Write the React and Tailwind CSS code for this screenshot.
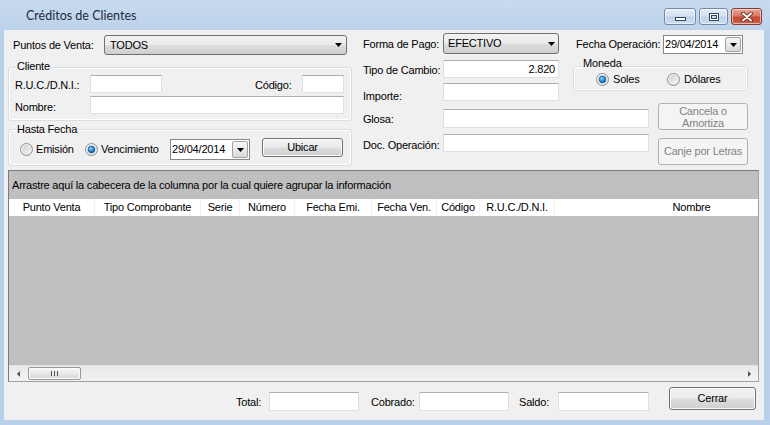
import React from "react";

function Arrow() {
  return (
    <svg width="7" height="4" viewBox="0 0 7 4" className="shrink-0">
      <path d="M0 0H7L3.5 4Z" fill="#000" />
    </svg>
  );
}

function TB({ cls = "", children }) {
  return (
    <div className={`shrink-0 bg-white border border-[#dde1e7] border-t-[#abadb3] flex items-center justify-end pr-[3px] ${cls}`}>
      {children}
    </div>
  );
}

function Combo({ cls = "", text }) {
  return (
    <div className={`shrink-0 flex items-center rounded-[3px] border border-[#707070] bg-[linear-gradient(#f2f2f2_0%,#ebebeb_48%,#dddddd_52%,#cfcfcf_100%)] ${cls}`}>
      <span className="flex-1 whitespace-nowrap">{text}</span>
      <Arrow />
    </div>
  );
}

function Btn({ cls = "", children, disabled }) {
  return (
    <div
      className={`shrink-0 flex flex-col items-center justify-center rounded-[3px] border text-center ${
        disabled
          ? "border-[#adb2b5] bg-[#f4f4f4] text-[#838383]"
          : "border-[#707070] bg-[linear-gradient(#f2f2f2_0%,#ebebeb_48%,#dddddd_52%,#cfcfcf_100%)] shadow-[inset_0_0_0_1px_#fcfcfc]"
      } ${cls}`}
    >
      {children}
    </div>
  );
}

function DatePick({ cls = "" }) {
  return (
    <div className={`shrink-0 flex items-stretch bg-white border border-[#828790] ${cls}`}>
      <span className="flex-1 flex items-center pl-[1px] whitespace-nowrap">29/04/2014</span>
      <div className="w-[16px] m-[1px] flex items-center justify-center rounded-[2px] border border-[#9ea3a8] bg-[linear-gradient(#f6f6f6_0%,#e9e9e9_50%,#d9d9d9_100%)]">
        <Arrow />
      </div>
    </div>
  );
}

function Radio({ checked }) {
  return (
    <svg width="13" height="13" viewBox="0 0 13 13" className="shrink-0">
      <defs>
        <linearGradient id="rOuter" x1="0" y1="0" x2="1" y2="1">
          <stop offset="0" stopColor="#f7f7f7" />
          <stop offset="1" stopColor="#e0e0e0" />
        </linearGradient>
        <linearGradient id="rInner" x1="0" y1="0" x2="1" y2="1">
          <stop offset="0" stopColor="#cbcfd5" />
          <stop offset="1" stopColor="#f6f6f6" />
        </linearGradient>
        <radialGradient id="rDot" cx="0.4" cy="0.35" r="0.7">
          <stop offset="0" stopColor="#8fd4fb" />
          <stop offset="0.5" stopColor="#2f8fd6" />
          <stop offset="1" stopColor="#0b4c86" />
        </radialGradient>
      </defs>
      <circle cx="6.5" cy="6.5" r="6" fill="url(#rOuter)" stroke="#8e8f8f" />
      <circle cx="6.5" cy="6.5" r="4.3" fill="url(#rInner)" />
      {checked && <circle cx="6.5" cy="6.5" r="3.4" fill="url(#rDot)" stroke="#1d5284" strokeWidth="0.6" />}
    </svg>
  );
}

function Group({ cls = "", legend, legendCls = "", children }) {
  return (
    <div className={`shrink-0 flex flex-col rounded-[3px] border border-[#d5dfe5] shadow-[inset_0_0_0_1px_#ffffff] ${cls}`}>
      <div className={`self-start h-[13px] bg-[#f0f0f0] px-[1px] whitespace-nowrap ${legendCls}`}>{legend}</div>
      {children}
    </div>
  );
}

function CapBtn({ cls = "", children, red }) {
  return (
    <div
      className={`h-[17px] flex items-center justify-center rounded-[3px] border ${
        red
          ? "border-[#8a3a2e] bg-[linear-gradient(#e8a594_0%,#d97a66_45%,#c34a36_55%,#c8604a_100%)]"
          : "border-[#7389a6] bg-[linear-gradient(#e6eef8_0%,#d3e0f0_45%,#c1d3ea_55%,#cbdcef_100%)]"
      } shadow-[inset_0_0_0_1px_rgba(255,255,255,0.55)] ${cls}`}
    >
      {children}
    </div>
  );
}

const cols = [
  ["Punto Venta", "w-[86px]"],
  ["Tipo Comprobante", "w-[106px]"],
  ["Serie", "w-[39px]"],
  ["Número", "w-[55px]"],
  ["Fecha Emi.", "w-[77px]"],
  ["Fecha Ven.", "w-[65px]"],
  ["Código", "w-[43px]"],
  ["R.U.C./D.N.I.", "w-[75px]"],
  ["Nombre", "w-[274px]"],
];

export default function App() {
  return (
    <div className="w-[770px] h-[425px] overflow-hidden bg-[#b9d1ea] flex flex-col font-['Liberation_Sans',Arial,sans-serif] text-[11px] leading-[13px] tracking-[-0.2px] text-black">
      {/* Title bar */}
      <div className="h-[30px] shrink-0 flex items-start bg-[linear-gradient(#c8daee,#bcd3eb)]">
        <div className="ml-[26px] mt-[8px] font-['Lato',sans-serif] text-[12.5px] leading-[16px] tracking-normal text-[#1e2b3b]">
          Créditos de Clientes
        </div>
        <div className="ml-auto mr-[8px] mt-[8px] flex gap-[3px]">
          <CapBtn cls="w-[32px] items-end pb-[3px]">
            <svg width="11" height="4" viewBox="0 0 11 4">
              <rect x="0.5" y="0.5" width="10" height="3" fill="#ffffff" stroke="#36465d" />
            </svg>
          </CapBtn>
          <CapBtn cls="w-[29px]">
            <svg width="10" height="8" viewBox="0 0 10 8">
              <rect x="0.5" y="0.5" width="9" height="7" fill="#ffffff" stroke="#36465d" />
              <rect x="2.5" y="2.5" width="5" height="3" fill="#c9d9ee" stroke="#36465d" />
            </svg>
          </CapBtn>
          <CapBtn red cls="w-[31px]">
            <svg width="12" height="10" viewBox="0 0 12 10">
              <path d="M2 1.5L10 8.5M10 1.5L2 8.5" stroke="#5a1e16" strokeWidth="3.6" strokeLinecap="round" />
              <path d="M2 1.5L10 8.5M10 1.5L2 8.5" stroke="#ffffff" strokeWidth="2" strokeLinecap="round" />
            </svg>
          </CapBtn>
        </div>
      </div>

      {/* Client area */}
      <div className="flex-1 ml-[4px] mr-[6px] mb-[5px] bg-[#f0f0f0] flex flex-col">
        {/* Top form */}
        <div className="h-[140px] shrink-0 flex">
          {/* Left column */}
          <div className="ml-[4px] w-[344px] shrink-0 flex flex-col">
            <div className="mt-[5px] flex items-center">
              <div className="w-[96px] pl-[5px] whitespace-nowrap">Puntos de Venta:</div>
              <Combo cls="w-[243px] h-[20px] pl-[5px] pr-[4px]" text="TODOS" />
            </div>

            <Group cls="mt-[12px] h-[54px]" legend="Cliente" legendCls="-mt-[8px] ml-[7px]">
              <div className="mt-[2px] flex items-start">
                <div className="w-[81px] pl-[6px] mt-[4px] whitespace-nowrap">R.U.C./D.N.I.:</div>
                <TB cls="w-[72px] h-[18px]" />
                <div className="ml-[93px] w-[47px] mt-[4px] whitespace-nowrap">Código:</div>
                <TB cls="w-[42px] h-[18px]" />
              </div>
              <div className="mt-[3px] flex items-start">
                <div className="w-[81px] pl-[6px] mt-[5px] whitespace-nowrap">Nombre:</div>
                <TB cls="w-[254px] h-[18px]" />
              </div>
            </Group>

            <Group cls="mt-[8px] h-[37px]" legend="Hasta Fecha" legendCls="-mt-[7px] ml-[7px]">
              <div className="flex items-start">
                <div className="ml-[11px] w-[65px] mt-[7px] flex items-center gap-[3px] whitespace-nowrap">
                  <Radio />
                  <span>Emisión</span>
                </div>
                <div className="w-[85px] mt-[7px] flex items-center gap-[3px] whitespace-nowrap">
                  <Radio checked />
                  <span>Vencimiento</span>
                </div>
                <DatePick cls="mt-[3px] w-[80px] h-[21px]" />
                <Btn cls="ml-[12px] mt-[2px] w-[81px] h-[19px]">Ubicar</Btn>
              </div>
            </Group>
          </div>

          {/* Right part */}
          <div className="ml-[11px] w-[385px] shrink-0 flex flex-col">
            {/* Row A */}
            <div className="mt-[3px] flex items-start">
              <div className="w-[80px] mt-[5px] whitespace-nowrap">Forma de Pago:</div>
              <Combo cls="w-[116px] h-[21px] pl-[4px] pr-[3px]" text="EFECTIVO" />
              <div className="ml-[17px] w-[87px] mt-[5px] whitespace-nowrap">Fecha Operación:</div>
              <DatePick cls="mt-[2px] w-[80px] h-[19px]" />
            </div>

            {/* Section B */}
            <div className="flex items-start">
              <div className="w-[196px] shrink-0 flex flex-col">
                <div className="mt-[6px] flex items-start">
                  <div className="w-[80px] mt-[4px] whitespace-nowrap">Tipo de Cambio:</div>
                  <TB cls="w-[116px] h-[18px]">2.820</TB>
                </div>
                <div className="mt-[5px] flex items-start">
                  <div className="w-[80px] mt-[7px] whitespace-nowrap">Importe:</div>
                  <TB cls="w-[116px] h-[18px]" />
                </div>
              </div>
              <Group cls="ml-[14px] mt-[12px] w-[175px] h-[25px]" legend="Moneda" legendCls="-mt-[10px] ml-[8px]">
                <div className="mt-[3px] flex items-center">
                  <div className="ml-[22px] w-[71px] flex items-center gap-[4px]">
                    <Radio checked />
                    <span>Soles</span>
                  </div>
                  <div className="flex items-center gap-[4px]">
                    <Radio />
                    <span>Dólares</span>
                  </div>
                </div>
              </Group>
            </div>

            {/* Section C */}
            <div className="flex items-start">
              <div className="w-[287px] shrink-0 flex flex-col">
                <div className="mt-[6px] flex items-start">
                  <div className="w-[80px] mt-[4px] whitespace-nowrap">Glosa:</div>
                  <TB cls="w-[206px] h-[19px]" />
                </div>
                <div className="mt-[6px] flex items-start">
                  <div className="w-[80px] mt-[5px] whitespace-nowrap">Doc. Operación:</div>
                  <TB cls="w-[206px] h-[18px]" />
                </div>
              </div>
              <div className="ml-[8px] w-[90px] shrink-0 flex flex-col">
                <Btn disabled cls="h-[27px] leading-[12px]">
                  <span>Cancela o</span>
                  <span>Amortiza</span>
                </Btn>
                <Btn disabled cls="mt-[8px] h-[27px]">
                  Canje por Letras
                </Btn>
              </div>
            </div>
          </div>
        </div>

        {/* Grid */}
        <div className="ml-[4px] w-[751px] h-[212px] shrink-0 border border-[#7a7a7a] border-r-[#a0a0a0] border-b-[#a0a0a0] flex flex-col bg-[#bfbfbf] overflow-hidden">
          <div className="h-[28px] shrink-0 pl-[3px] pt-[8px] whitespace-nowrap">
            Arrastre aquí la cabecera de la columna por la cual quiere agrupar la información
          </div>
          <div className="h-[17px] shrink-0 flex bg-white overflow-hidden">
            {cols.map(([t, w]) => (
              <div key={t} className={`${w} shrink-0 flex items-center justify-center border-r border-[#f0f0f0] whitespace-nowrap`}>
                {t}
              </div>
            ))}
          </div>
          <div className="flex-1" />
          <div className="h-[16px] shrink-0 flex items-center bg-[linear-gradient(#e9e9e9,#f3f3f3)] border-t border-[#e2e2e2]">
            <div className="w-[18px] flex items-center justify-center">
              <svg width="3" height="6" viewBox="0 0 3 6">
                <path d="M3 0V6L0 3Z" fill="#4d4d4d" />
              </svg>
            </div>
            <div className="ml-[1px] w-[53px] h-[13px] rounded-[2px] border border-[#979797] bg-[linear-gradient(#f5f5f5_0%,#e8e8e8_50%,#d6d6d6_100%)] shadow-[inset_0_0_0_1px_#fbfbfb] flex items-center justify-center gap-[2px]">
              <span className="w-[1px] h-[5px] bg-[#555]" />
              <span className="w-[1px] h-[5px] bg-[#555]" />
              <span className="w-[1px] h-[5px] bg-[#555]" />
            </div>
            <div className="flex-1" />
            <div className="w-[18px] flex items-center justify-center">
              <svg width="3" height="6" viewBox="0 0 3 6">
                <path d="M0 0V6L3 3Z" fill="#4d4d4d" />
              </svg>
            </div>
          </div>
        </div>

        {/* Bottom row */}
        <div className="flex items-start">
          <div className="ml-[232px] w-[33px] mt-[14px] whitespace-nowrap">Total:</div>
          <TB cls="mt-[10px] w-[90px] h-[19px]" />
          <div className="ml-[12px] w-[48px] mt-[14px] whitespace-nowrap">Cobrado:</div>
          <TB cls="mt-[10px] w-[90px] h-[19px]" />
          <div className="ml-[10px] w-[39px] mt-[14px] whitespace-nowrap">Saldo:</div>
          <TB cls="mt-[10px] w-[91px] h-[19px]" />
          <Btn cls="ml-[20px] mt-[5px] w-[87px] h-[23px]">Cerrar</Btn>
        </div>
      </div>
    </div>
  );
}
